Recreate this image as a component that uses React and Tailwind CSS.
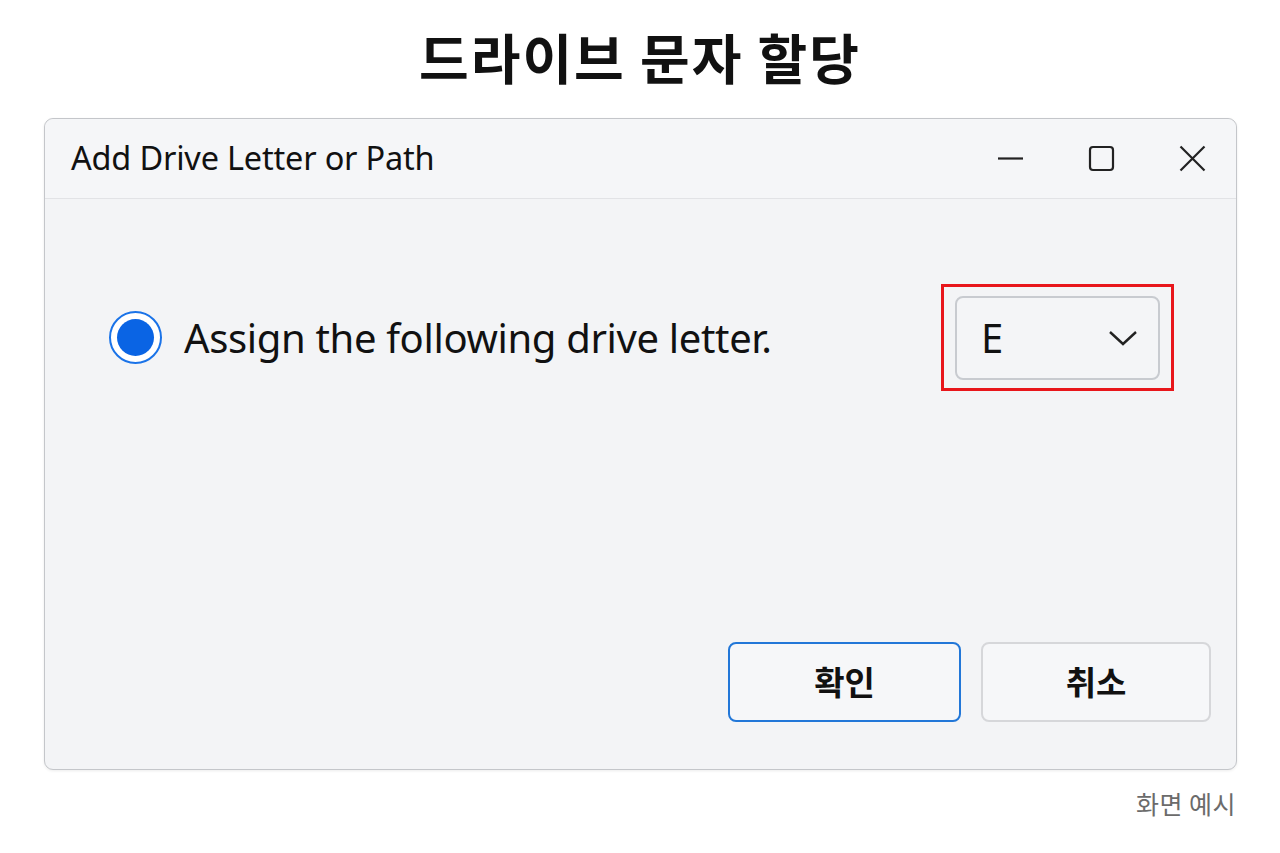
import React, { useState } from "react";

const latin = { fontFamily: '"Noto Sans", "Noto Sans CJK KR", sans-serif' };
const korean = { fontFamily: '"Noto Sans CJK KR", "Noto Sans", sans-serif' };

const DriveLetterDialog = () => {
  const [letter] = useState("E");

  return (
    <div className="w-[1193px] h-[652px] ml-[44px] flex flex-col rounded-[9px] border border-[#c4c6ca] bg-[#f3f4f6] shadow-[0_1px_3px_rgba(0,0,0,0.08)]">
      {/* title bar */}
      <div className="h-[80px] flex items-center justify-between border-b border-[#e2e3e6] bg-[#f5f6f8] rounded-t-[9px] pl-[26px] pr-[30px]">
        <div className="text-[32.5px] text-[#111] tracking-[-0.2px]" style={latin}>
          Add Drive Letter or Path
        </div>
        <div className="flex items-center gap-[64px] text-[#222]">
          <svg width="27" height="27" viewBox="0 0 27 27">
            <line x1="1" y1="13.5" x2="26" y2="13.5" stroke="currentColor" strokeWidth="2.2" />
          </svg>
          <svg width="27" height="27" viewBox="0 0 27 27">
            <rect x="2" y="2" width="23" height="23" rx="3" fill="none" stroke="currentColor" strokeWidth="2.2" />
          </svg>
          <svg width="27" height="27" viewBox="0 0 27 27">
            <path d="M1.5 1.5 L25.5 25.5 M25.5 1.5 L1.5 25.5" stroke="currentColor" strokeWidth="2.2" fill="none" />
          </svg>
        </div>
      </div>

      <div className="flex-1 flex flex-col justify-between pt-[85px] pb-[47px]">
        {/* radio option + letter selector */}
        <div className="flex items-center justify-between pl-[64px] pr-[62px]">
          <label className="flex items-center gap-[22px]">
            <span className="w-[53px] h-[53px] rounded-full border-[2.5px] border-[#1a73e8] bg-white flex items-center justify-center">
              <span className="w-[37px] h-[37px] rounded-full bg-[#0a64e4]" />
            </span>
            <span className="text-[40px] text-[#111] tracking-[-0.35px]" style={latin}>
              Assign the following drive letter.
            </span>
          </label>
          <div className="w-[233px] h-[107px] border-[3px] border-[#e8161b] flex items-center justify-center">
            <div className="w-[205px] h-[84px] rounded-[8px] border-2 border-[#c8cbd0] bg-[#f4f5f7] flex items-center justify-between pl-[24px] pr-[20px]">
              <span className="text-[40px] text-[#111]" style={latin}>{letter}</span>
              <svg width="30" height="16" viewBox="0 0 30 16">
                <path d="M2 2 L15 14 L28 2" stroke="#222" strokeWidth="2.4" fill="none" />
              </svg>
            </div>
          </div>
        </div>

        {/* dialog buttons */}
        <div className="flex justify-end gap-[20px] pr-[25px]">
          <button className="w-[233px] h-[80px] rounded-[8px] border-2 border-[#2277d8] bg-[#f6f7f9] text-[33px] font-semibold text-[#111]" style={korean}>
            확인
          </button>
          <button className="w-[230px] h-[80px] rounded-[8px] border-2 border-[#d6d7da] bg-[#f6f7f9] text-[33px] font-semibold text-[#111]" style={korean}>
            취소
          </button>
        </div>
      </div>
    </div>
  );
};

const App = () => {
  return (
    <div className="w-[1280px] h-[853px] bg-white overflow-hidden">
      <h1 className="h-[118px] flex items-center justify-center pb-[6px] text-[54px] font-bold text-[#111] tracking-[2px]" style={korean}>
        드라이브 문자 할당
      </h1>
      <DriveLetterDialog />
      <div className="mt-[15px] pr-[44px] text-right text-[25px] text-[#6b6b6b] tracking-[0.5px]" style={korean}>
        화면 예시
      </div>
    </div>
  );
};

export default App;
